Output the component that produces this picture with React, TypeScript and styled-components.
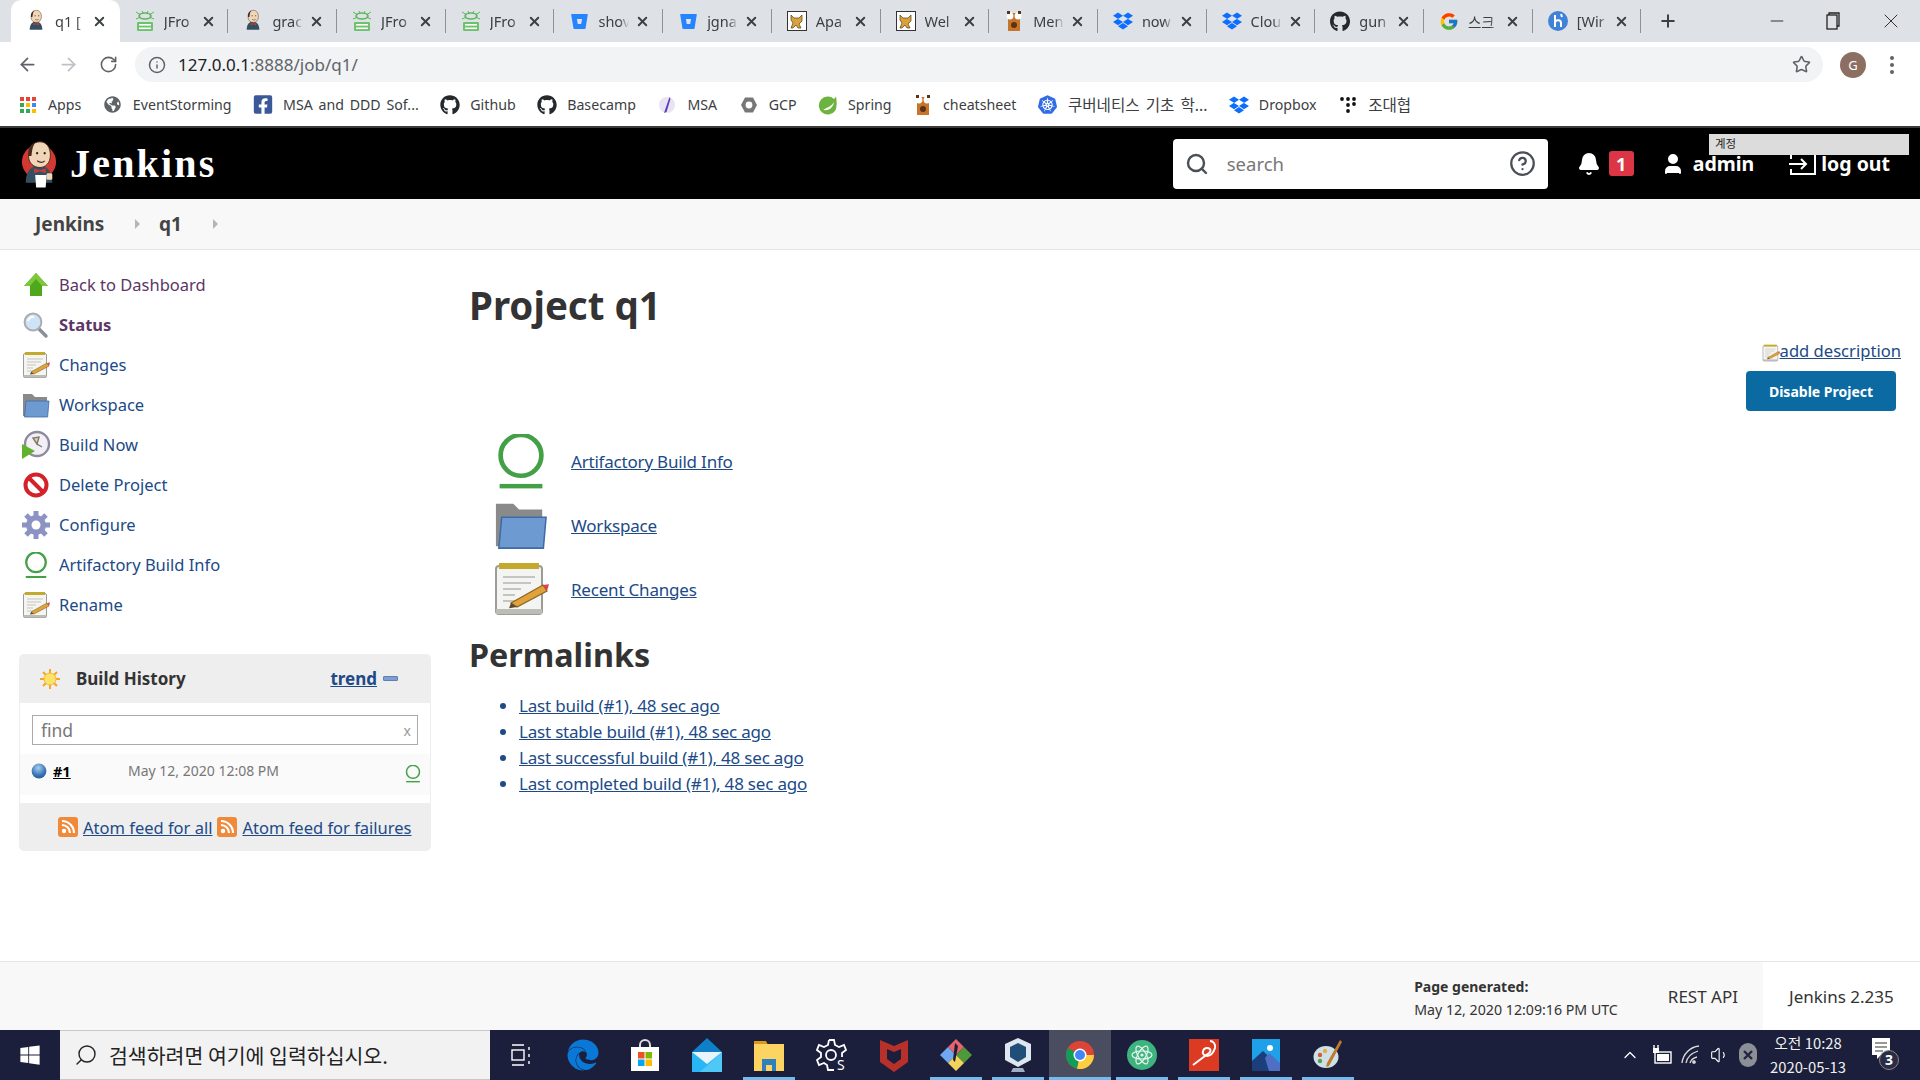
import type { ReactNode } from "react";
import styled, { createGlobalStyle } from "styled-components";
import { ArrowLeft, ArrowRight, RotateCw, Info, Star, Plus, X, Minus, Search, CircleHelp, Bell, User, ChevronUp, Volume1 } from "lucide-react";
import { FaGithub, FaDropbox, FaFacebookSquare, FaBitbucket, FaEdge, FaWindows, FaGlobeAmericas } from "react-icons/fa";
import { SiKubernetes } from "react-icons/si";
import { FcGoogle } from "react-icons/fc";

const Global = createGlobalStyle`
  html, body { margin: 0; padding: 0; background: #fff; }
  body { font-family: "Noto Sans", "Noto Sans CJK KR", sans-serif; overflow: hidden; }
  * { box-sizing: border-box; }
`;

const Screen = styled.div`
  width: 1920px;
  height: 1080px;
  display: flex;
  flex-direction: column;
  overflow: hidden;
  position: relative;
`;

/* ---------- drawings ---------- */

const Butler = ({ size = 24, red = false }: { size?: number; red?: boolean }) => (
  <svg width={size} height={size * 1.3} viewBox="0 0 40 52">
    {red && <circle cx="20" cy="24" r="18" fill="#d33833" />}
    <path d="M6 46c0-12 6-18 14-18s14 6 14 18z" fill="#335061" />
    <path d="M9 18c0-10 5-15 12-15s11 6 11 14c0 8-5 13-11 13S9 26 9 18z" fill="#f0d6b7" stroke="#49291b" strokeWidth="1" />
    <path d="M9 18c-1-9 4-14 7-14-3 4-3 8-4 14z" fill="#49291b" />
    <circle cx="18" cy="15" r="1.2" fill="#222" />
    <circle cx="26" cy="15" r="1.2" fill="#222" />
    <path d="M18 23c3 2 6 2 8 0" stroke="#49291b" fill="none" strokeWidth="1.2" />
    <path d="M15 31l6 2 6-2v5l-6-2-6 2z" fill="#d33833" />
    {red && <path d="M16 38h12l-1 13H17z" fill="#fff" />}
    {red && <rect x="28" y="36" width="6" height="7" rx="1.5" fill="#f0d6b7" />}
  </svg>
);

const FrogIcon = () => (
  <svg width="20" height="24" viewBox="0 0 20 24">
    <ellipse cx="10" cy="7" rx="6" ry="3" fill="none" stroke="#5cb85c" strokeWidth="1.6" />
    <path d="M1 3l5 3M19 3l-5 3M1 10l5-2M19 10l-5-2M7 2l1 2M13 2l-1 2" stroke="#5cb85c" strokeWidth="1" />
    <rect x="2" y="13" width="16" height="9" rx="1" fill="#6cc36c" />
    <rect x="4" y="15" width="12" height="1.6" fill="#fff" />
    <rect x="4" y="18.5" width="12" height="1.6" fill="#fff" />
  </svg>
);

const TomcatIcon = () => (
  <svg width="20" height="20" viewBox="0 0 20 20">
    <rect x=".5" y=".5" width="19" height="19" fill="#fff" stroke="#333" />
    <path d="M4 4l3 3h5l3-3v6l-3 3 2 4h-3l-2-3-3 3H4l2-5-2-3z" fill="#d9a23c" stroke="#5a3c12" strokeWidth=".7" />
  </svg>
);

const FoxIcon = ({ size = 20 }: { size?: number }) => (
  <svg width={size} height={size} viewBox="0 0 20 20">
    <rect x="4" y="2" width="12" height="18" fill="#c8742a" />
    <circle cx="6" cy="5" r="3.4" fill="#fff" />
    <circle cx="14" cy="5" r="3.4" fill="#fff" />
    <circle cx="10" cy="14" r="3" fill="#5b3418" />
    <rect x="3" y="0" width="3" height="3" fill="#5b3418" />
    <rect x="14" y="0" width="3" height="3" fill="#5b3418" />
  </svg>
);

const HIcon = () => (
  <svg width="20" height="20" viewBox="0 0 20 20">
    <circle cx="10" cy="10" r="10" fill="#3f82d8" />
    <path d="M7 4v12M7 11c2-3 6-2 6 1v4M13 3l1 3" stroke="#fff" strokeWidth="2" fill="none" />
  </svg>
);

const AppsGrid = () => (
  <svg width="16" height="16" viewBox="0 0 16 16">
    {[0, 6, 12].map((y, r) =>
      [0, 6, 12].map((x, c) => (
        <rect key={`${r}${c}`} x={x} y={y} width="4" height="4" fill={[["#ea4335", "#ea4335", "#ea4335"], ["#34a853", "#fbbc04", "#4285f4"], ["#34a853", "#34a853", "#fbbc04"]][r][c]} />
      ))
    )}
  </svg>
);

const MsaIcon = () => (
  <svg width="18" height="18" viewBox="0 0 18 18">
    <circle cx="9" cy="9" r="8" fill="#e9e3f5" />
    <path d="M11.5 1L6 17l2.5-1 4-13z" fill="#5b3fb0" />
  </svg>
);

const GcpIcon = () => (
  <svg width="18" height="18" viewBox="0 0 18 18">
    <path d="M5 1.5h8L17 9l-4 7.5H5L1 9z" fill="#777" />
    <circle cx="9" cy="9" r="3.4" fill="#fff" />
  </svg>
);

const SpringIcon = () => (
  <svg width="20" height="20" viewBox="0 0 20 20">
    <path d="M18 1c0 1-1 2-2 3A9 9 0 1 0 17 16c2-3 2-9 1-15z" fill="#6db33f" />
    <path d="M5 15c7 1 10-3 11-8-2 4-6 5-11 8z" fill="#fff" />
  </svg>
);

const BraillIcon = () => (
  <svg width="16" height="18" viewBox="0 0 16 18">
    {[[2, 3], [8, 3], [14, 3], [8, 9], [14, 8], [8, 15]].map(([x, y]) => (
      <circle key={`${x}${y}`} cx={x} cy={y} r="1.9" fill="#111" />
    ))}
  </svg>
);

const UpArrowIcon = () => (
  <svg width="28" height="28" viewBox="0 0 28 28">
    <path d="M14 2L26 15h-6v10H8V15H2z" fill="#4fa81c" />
    <path d="M14 2L26 15h-6L14 8 8 15H2z" fill="#7cc83a" />
  </svg>
);

const MagnifierIcon = () => (
  <svg width="28" height="28" viewBox="0 0 28 28">
    <path d="M16 17l8 8" stroke="#8a8f96" strokeWidth="3.4" strokeLinecap="round" />
    <circle cx="11" cy="11" r="8.4" fill="#cfe3f7" stroke="#a9adb2" strokeWidth="2" />
    <path d="M6 10a5 5 0 0 1 6-4" stroke="#fff" strokeWidth="2" fill="none" />
  </svg>
);

const Notepad = ({ size = 28 }: { size?: number }) => (
  <svg width={size} height={size} viewBox="0 0 28 28">
    <rect x="1.5" y="2.5" width="23" height="24" rx="1.5" fill="#f4f4f2" stroke="#9c9c98" />
    <rect x="1.5" y="24" width="23" height="2.5" fill="#bdbdb8" />
    <rect x="3" y="1" width="20" height="3" fill="#c3a92c" />
    <path d="M5 8h16M5 11h14M5 14h9M5 17h6M5 20h12" stroke="#c5c5c0" strokeWidth="1" />
    <path d="M9 21l16-9 2 3-15 8z" fill="#e0a33c" stroke="#8a6420" strokeWidth=".6" />
    <path d="M25 12l2 3 1-3.4z" fill="#e0414a" />
    <path d="M9 21l3 2-4 .6z" fill="#5a4a2a" />
  </svg>
);

const Folder = ({ size = 28 }: { size?: number }) => (
  <svg width={size} height={size} viewBox="0 0 28 28">
    <path d="M1 25V3h9l3 3h12v19z" fill="#8a8a8a" />
    <path d="M4 10h23l-1.4 16H2.5z" fill="#6d9bd1" stroke="#3d6ca8" strokeWidth=".8" />
  </svg>
);

const ClockPlayIcon = () => (
  <svg width="30" height="30" viewBox="0 0 30 30">
    <circle cx="16" cy="14" r="12" fill="#f2f0f5" stroke="#8d8aa0" strokeWidth="2.4" />
    <path d="M16 14l-4-6 6-1zM16 14l5 3" stroke="#777" strokeWidth="1.4" fill="#f0d987" />
    <path d="M1 14l13 7-13 8z" fill="#5fb32c" />
  </svg>
);

const BanIcon = () => (
  <svg width="28" height="28" viewBox="0 0 28 28">
    <circle cx="14" cy="14" r="10.5" fill="#fff" stroke="#d4222a" strokeWidth="4" />
    <path d="M7 7l14 14" stroke="#d4222a" strokeWidth="4" />
  </svg>
);

const GearIcon = () => (
  <svg width="30" height="30" viewBox="0 0 30 30">
    <path d="M15 15m-10 0a10 10 0 1 0 20 0a10 10 0 1 0-20 0" fill="#8c93c4" />
    <path d="M15 1v28M1 15h28M5 5l20 20M25 5L5 25" stroke="#8c93c4" strokeWidth="5" />
    <circle cx="15" cy="15" r="4.5" fill="#fff" />
  </svg>
);

const Artifactory = ({ size = 24 }: { size?: number }) => (
  <svg width={size} height={size * 1.1} viewBox="0 0 46 54">
    <circle cx="23" cy="21" r="20" fill="none" stroke="#43a047" strokeWidth="4.6" />
    <rect x="2" y="49" width="42" height="4.4" fill="#43a047" />
  </svg>
);

const Sun = () => (
  <svg width="20" height="20" viewBox="0 0 20 20">
    <path d="M10 0v20M0 10h20M3 3l14 14M17 3L3 17" stroke="#f6a623" strokeWidth="2" />
    <circle cx="10" cy="10" r="6" fill="#fbe36a" stroke="#f6b73c" />
  </svg>
);

const Ball = () => (
  <svg width="16" height="16" viewBox="0 0 16 16">
    <defs>
      <radialGradient id="ball" cx=".45" cy=".3" r=".8">
        <stop offset="0" stopColor="#a9cdef" />
        <stop offset=".6" stopColor="#3c77b8" />
        <stop offset="1" stopColor="#1f4f8a" />
      </radialGradient>
    </defs>
    <circle cx="8" cy="8" r="7.4" fill="url(#ball)" />
  </svg>
);

const Rss = () => (
  <svg width="20" height="20" viewBox="0 0 20 20">
    <rect width="20" height="20" rx="3" fill="#ee8a3a" />
    <circle cx="6" cy="14" r="2.2" fill="#fff" />
    <path d="M4 8a8 8 0 0 1 8 8M4 4a12 12 0 0 1 12 12" stroke="#fff" strokeWidth="2.2" fill="none" />
  </svg>
);

const LogoutIcon = () => (
  <svg width="28" height="24" viewBox="0 0 28 24" fill="none" stroke="#fff" strokeWidth="2">
    <path d="M2 7V2h24v20H2v-5" />
    <path d="M0 12h17M12 7l5 5-5 5" />
  </svg>
);

const ChromeIcon = ({ size = 28 }: { size?: number }) => (
  <svg width={size} height={size} viewBox="0 0 28 28">
    <circle cx="14" cy="14" r="14" fill="#db4437" />
    <path d="M14 14L2 7A14 14 0 0 0 11 27.7z" fill="#0f9d58" />
    <path d="M14 14h14a14 14 0 0 1-17 13.7z" fill="#ffcd40" />
    <circle cx="14" cy="14" r="6.5" fill="#fff" />
    <circle cx="14" cy="14" r="5" fill="#4285f4" />
  </svg>
);

const StoreIcon = () => (
  <svg width="28" height="32" viewBox="0 0 28 32">
    <path d="M9 9V6a5 5 0 0 1 10 0v3" stroke="#ddd" strokeWidth="2" fill="none" />
    <rect y="8" width="28" height="24" fill="#fff" />
    <rect x="7" y="13" width="6.5" height="6.5" fill="#f25022" />
    <rect x="14.5" y="13" width="6.5" height="6.5" fill="#7fba00" />
    <rect x="7" y="20.5" width="6.5" height="6.5" fill="#00a4ef" />
    <rect x="14.5" y="20.5" width="6.5" height="6.5" fill="#ffb900" />
  </svg>
);

const MailIcon = () => (
  <svg width="30" height="34" viewBox="0 0 30 34">
    <path d="M15 0L30 14v20H0V14z" fill="#0f7fc8" />
    <path d="M0 14h30v20H0z" fill="#29b6f6" />
    <path d="M0 14h30L15 26z" fill="#e8f3fb" />
    <path d="M30 14v20H8z" fill="#4fc8f7" />
  </svg>
);

const ExplorerIcon = () => (
  <svg width="30" height="32" viewBox="0 0 30 32">
    <path d="M0 2h12l2 4H0z" fill="#d99a1c" />
    <rect y="5" width="30" height="27" fill="#fcd462" />
    <rect x="8" y="20" width="14" height="12" fill="#2f7fbd" />
    <rect x="12" y="26" width="6" height="6" fill="#fcd462" />
  </svg>
);

const CogSIcon = () => (
  <svg width="32" height="34" viewBox="0 0 32 34" fill="none" stroke="#fff" strokeWidth="1.8">
    <path d="M13 2h5l1 5 4 2 5-2 2 5-4 3v4" />
    <path d="M13 2l-1 5-4 2-5-2-2 5 4 3v4l-4 3 2 5 5-2 3 2 1 5h6" />
    <circle cx="15" cy="17" r="5" />
    <text x="21" y="32" fill="#fff" stroke="none" fontSize="14" fontFamily="Noto Sans">S</text>
  </svg>
);

const McAfeeIcon = () => (
  <svg width="28" height="34" viewBox="0 0 28 34">
    <path d="M0 2l14 6 14-6v22l-14 10L0 24z" fill="#b8302a" />
    <path d="M7 11l7 3 7-3v10l-7 5-7-5z" fill="#1b1f3b" />
  </svg>
);

const KrakenIcon = () => (
  <svg width="32" height="32" viewBox="0 0 32 32">
    <path d="M0 16l8-8 8 8-8 8z" fill="#6fa8f0" />
    <path d="M8 8l8-8 8 8-8 8z" fill="#e8646c" />
    <path d="M16 16l8-8 8 8-8 8z" fill="#4e9a3a" />
    <path d="M8 24l8-8 8 8-8 8z" fill="#f2d35c" />
    <path d="M15 4l3 3-3 16-2-2z" fill="#1b1f3b" />
  </svg>
);

const BoxIcon = () => (
  <svg width="30" height="36" viewBox="0 0 30 36">
    <path d="M15 1l13 6v16l-13 7L2 23V7z" fill="#dfe6ef" />
    <path d="M15 6l8 4v10l-8 5-8-5V10z" fill="#1f4e79" />
    <path d="M10 31h10l2 4H8z" fill="#9fb0c4" />
  </svg>
);

const AtomIcon = () => (
  <svg width="30" height="30" viewBox="0 0 30 30">
    <circle cx="15" cy="15" r="15" fill="#3fb37f" />
    <g fill="none" stroke="#e6f6ee" strokeWidth="1.2">
      <ellipse cx="15" cy="15" rx="10" ry="4" />
      <ellipse cx="15" cy="15" rx="10" ry="4" transform="rotate(60 15 15)" />
      <ellipse cx="15" cy="15" rx="10" ry="4" transform="rotate(120 15 15)" />
    </g>
    <circle cx="15" cy="15" r="1.6" fill="#e6f6ee" />
  </svg>
);

const RedAppIcon = () => (
  <svg width="30" height="32" viewBox="0 0 30 32">
    <rect width="30" height="32" fill="#dd3a24" />
    <path d="M4 26L20 14c5-4-4-8-6-2-2 5 8 9 12-3 1-4-2-7-5-7" stroke="#fff" strokeWidth="2" fill="none" />
  </svg>
);

const PhotosIcon = () => (
  <svg width="28" height="32" viewBox="0 0 28 32">
    <rect width="28" height="32" fill="#1ea1e8" />
    <circle cx="18" cy="9" r="3" fill="#fff" />
    <path d="M0 32V22l11-10 17 16v4z" fill="#1c3f7c" />
    <path d="M17 14l11 10v8H17l-4-13z" fill="#4f6fc4" />
  </svg>
);

const PaletteIcon = () => (
  <svg width="30" height="32" viewBox="0 0 30 32">
    <ellipse cx="13" cy="18" rx="12.5" ry="11" fill="#cfe0e8" />
    <circle cx="7" cy="16" r="2.2" fill="#d85a3c" />
    <circle cx="12" cy="12" r="2.2" fill="#e0b23c" />
    <circle cx="7" cy="22" r="2.2" fill="#5aa04c" />
    <path d="M27 1l2 2-13 24-3 1 1-4z" fill="#c07a2c" />
  </svg>
);

const BatteryIcon = () => (
  <svg width="20" height="20" viewBox="0 0 20 20">
    <path d="M2 0v4M6 0v4" stroke="#fff" strokeWidth="1.4" />
    <rect x="1" y="3" width="6" height="5" fill="#fff" />
    <rect x="3" y="7" width="16" height="11" fill="none" stroke="#fff" strokeWidth="1.4" />
    <rect x="5" y="9" width="12" height="7" fill="#fff" />
  </svg>
);

const WifiIcon = () => (
  <svg width="20" height="20" viewBox="0 0 20 20" fill="none" stroke="#ddd" strokeWidth="1.3">
    <path d="M1 18C2 9 9 2 18 1M5 18c1-6 6-10 12-12M9 18c1-3 3-5 7-6" />
    <circle cx="13" cy="17" r="1.2" fill="#ddd" />
  </svg>
);

const CloseDot = () => (
  <svg width="18" height="24" viewBox="0 0 18 24">
    <rect width="18" height="24" rx="9" fill="#8d8f96" />
    <path d="M5 8l8 8M13 8l-8 8" stroke="#22253f" strokeWidth="2.4" />
  </svg>
);

const ActionCenter = () => (
  <svg width="34" height="38" viewBox="0 0 34 38">
    <path d="M3 2h18v17H12l-4 4v-4H3z" fill="#fff" />
    <path d="M6 7h12M6 11h12M6 15h8" stroke="#333" strokeWidth="1.2" />
    <circle cx="20" cy="24" r="9.5" fill="#2a2d45" stroke="#888" />
    <text x="20" y="29" textAnchor="middle" fontSize="14" fontWeight="700" fill="#fff" fontFamily="Noto Sans">3</text>
  </svg>
);

/* ---------- browser chrome ---------- */

const TabStrip = styled.div`
  height: 42px;
  flex: none;
  background: #dee1e6;
  display: flex;
  align-items: stretch;
  padding-left: 11px;
`;

const TabItem = styled.div<{ $active?: boolean }>`
  width: 108.7px;
  flex: none;
  display: flex;
  align-items: center;
  padding-left: 15px;
  position: relative;
  background: ${(p) => (p.$active ? "#fff" : "transparent")};
  border-radius: ${(p) => (p.$active ? "10px 10px 0 0" : "0")};

  &::after {
    content: "";
    display: ${(p) => (p.$active ? "none" : "block")};
    position: absolute;
    right: 0;
    top: 9px;
    bottom: 9px;
    width: 1px;
    background: #8f9296;
  }
`;

const TabIcon = styled.span`
  width: 20px;
  height: 24px;
  flex: none;
  display: flex;
  align-items: center;
  justify-content: center;
`;

const TabTitle = styled.span`
  width: 31px;
  margin-left: 9px;
  font-size: 14.5px;
  color: #3c4043;
  white-space: nowrap;
  overflow: hidden;
  -webkit-mask-image: linear-gradient(90deg, #000 70%, transparent);
  mask-image: linear-gradient(90deg, #000 70%, transparent);
`;

const TabClose = styled.span`
  margin-left: 6px;
  display: flex;
  color: #3c4043;
`;

const NewTab = styled.span`
  margin-left: 17px;
  display: flex;
  align-items: center;
  color: #3c4043;
`;

const WindowButtons = styled.div`
  margin-left: auto;
  display: flex;
  align-items: center;
  gap: 39px;
  padding-right: 17px;
  color: #333;
`;

const Toolbar = styled.div`
  height: 45px;
  flex: none;
  display: flex;
  align-items: center;
  padding: 0 17px;
  background: #fff;
  color: #5f6368;
`;

const NavButton = styled.span<{ $off?: boolean }>`
  width: 41px;
  display: flex;
  color: ${(p) => (p.$off ? "#bdc1c6" : "#5f6368")};
`;

const Omnibox = styled.div`
  height: 35px;
  width: 1688px;
  flex: none;
  background: #f1f3f4;
  border-radius: 18px;
  display: flex;
  align-items: center;
  padding: 0 12px 0 13px;
  margin-left: -5px;
`;

const UrlText = styled.span`
  margin-left: 12px;
  font-size: 17px;
  color: #202124;
  span { color: #5f6368; }
`;

const OmniEnd = styled.span`
  margin-left: auto;
  display: flex;
`;

const Avatar = styled.span`
  width: 26px;
  height: 26px;
  margin-left: 17px;
  border-radius: 50%;
  background: #8d6e63;
  color: #fff;
  font-size: 13px;
  display: flex;
  align-items: center;
  justify-content: center;
  flex: none;
`;

const Dots = styled.span`
  margin-left: 24px;
  display: flex;
  flex-direction: column;
  gap: 3px;

  i {
    width: 4px;
    height: 4px;
    border-radius: 50%;
    background: #5f6368;
  }
`;

const BookmarkBar = styled.div`
  height: 41px;
  flex: none;
  display: flex;
  align-items: center;
  gap: 21.5px;
  padding: 0 0 4px 18px;
  border-bottom: 2px solid #3a3a3a;
  background: #fff;
`;

const Bookmark = styled.span<{ $cjk?: boolean }>`
  display: flex;
  align-items: center;
  gap: 10px;
  font-size: ${(p) => (p.$cjk ? "15.6px" : "14.2px")};
  word-spacing: 2px;
  color: #3c4043;
  white-space: nowrap;
`;

const BookmarkIcon = styled.span`
  width: 20px;
  display: flex;
  justify-content: center;
`;

/* ---------- jenkins header ---------- */

const JenkinsBar = styled.header`
  height: 71px;
  flex: none;
  background: #000;
  display: flex;
  align-items: center;
  padding-left: 20px;
  color: #fff;
  position: relative;
`;

const Brand = styled.span`
  margin-left: 12px;
  font-family: "Liberation Serif", serif;
  font-weight: 700;
  font-size: 40px;
  letter-spacing: 2.2px;
`;

const SearchBox = styled.div`
  margin-left: auto;
  width: 375px;
  height: 50px;
  background: #fff;
  border-radius: 4px;
  display: flex;
  align-items: center;
  padding: 0 12px;
  color: #4a4f57;
`;

const SearchLabel = styled.span`
  margin-left: 18px;
  font-size: 18.5px;
  color: #777;
  flex: 1;
`;

const BellWrap = styled.span`
  margin-left: 29px;
  display: flex;
`;

const CountBadge = styled.span`
  margin-left: 8px;
  width: 25px;
  height: 25px;
  border-radius: 3px;
  background: #dc3545;
  font-weight: 700;
  font-size: 18px;
  display: flex;
  align-items: center;
  justify-content: center;
`;

const HeadLink = styled.span<{ $gap: number; $left: number }>`
  margin-left: ${(p) => p.$left}px;
  display: flex;
  align-items: center;
  gap: ${(p) => p.$gap}px;
  font-size: 19.5px;
  font-weight: 700;
`;

const HeadEnd = styled.span`
  width: 30px;
  flex: none;
`;

const Tooltip = styled.div`
  position: absolute;
  left: 1709px;
  top: 6px;
  width: 200px;
  height: 21px;
  background: #dcdcdc;
  color: #222;
  font-size: 11.5px;
  padding: 1px 6px;
  font-family: "Noto Sans CJK KR", sans-serif;
`;

const Breadcrumbs = styled.nav`
  height: 51px;
  flex: none;
  background: #f8f8f8;
  border-bottom: 1px solid #e6e6e6;
  display: flex;
  align-items: center;
  padding-left: 35px;
  font-weight: 700;
  font-size: 19px;
  color: #444;
`;

const Crumb = styled.span<{ $width: number }>`
  width: ${(p) => p.$width}px;
`;

const Caret = styled.i<{ $width: number }>`
  width: ${(p) => p.$width}px;
  height: 0;
  border-left: 5px solid #b5b5b5;
  border-top: 5px solid transparent;
  border-bottom: 5px solid transparent;
`;

/* ---------- page ---------- */

const Body = styled.div`
  flex: 1;
  display: flex;
  min-height: 0;
`;

const SideColumn = styled.aside`
  width: 470px;
  flex: none;
  padding: 15px 0 0 19px;
`;

const TaskRow = styled.div`
  height: 40px;
  display: flex;
  align-items: center;
`;

const TaskIcon = styled.span`
  width: 40px;
  flex: none;
  display: flex;
  justify-content: center;
  padding-right: 6px;
`;

const TaskLabel = styled.span<{ $visited?: boolean; $bold?: boolean }>`
  font-size: 16.5px;
  padding-bottom: 2px;
  color: ${(p) => (p.$visited ? "#5c3566" : "#204a87")};
  font-weight: ${(p) => (p.$bold ? 700 : 400)};
`;

const HistoryPanel = styled.section`
  margin-top: 29px;
  width: 412px;
  border-radius: 5px;
  background: #eee;
  overflow: hidden;
`;

const HistoryHead = styled.div`
  height: 49px;
  display: flex;
  align-items: center;
  padding: 0 33px 0 21px;
  font-size: 17px;
  font-weight: 700;
  color: #333;
`;

const HistoryTitle = styled.span`
  margin-left: 16px;
`;

const TrendLink = styled.a`
  margin-left: auto;
  color: #204a87;
  text-decoration: underline;
`;

const TrendDash = styled.i`
  width: 15px;
  height: 5px;
  margin-left: 6px;
  background: #7f9fd0;
  border: 1px solid #5f7fb8;
  border-radius: 1px;
`;

const HistoryBody = styled.div`
  height: 100px;
  background: #fff;
  margin: 0 1px;
  padding-top: 12px;
`;

const FindBox = styled.div`
  margin: 0 12px;
  height: 30px;
  border: 1px solid #aaa;
  display: flex;
  align-items: center;
  justify-content: space-between;
  padding: 0 6px 0 8px;
  font-size: 17.5px;
  color: #777;
`;

const SmallX = styled.span`
  font-size: 14px;
  color: #999;
`;

const BuildRow = styled.div`
  margin-top: 9px;
  height: 41px;
  background: #fafafa;
  display: flex;
  align-items: flex-start;
  padding: 7px 9px 0 11px;

  svg:first-child {
    margin-top: 2px;
  }
`;

const BuildNumber = styled.a`
  margin-left: 6px;
  font-size: 14.5px;
  font-weight: 700;
  color: #000;
  text-decoration: underline;
  width: 75px;
`;

const BuildDate = styled.span`
  font-size: 14px;
  color: #777;
  flex: 1;
`;

const BuildMark = styled.span`
  margin-top: 2px;
  display: flex;
`;

const HistoryFoot = styled.div`
  height: 48px;
  display: flex;
  align-items: center;
  padding-left: 39px;
  gap: 5px;
`;

const FeedLink = styled.a`
  font-size: 16.5px;
  color: #204a87;
  text-decoration: underline;
`;

const Main = styled.main`
  flex: 1;
  position: relative;
  min-width: 0;
`;

const PageTitle = styled.h1`
  margin: 27px 0 0 -1px;
  font-size: 38.5px;
  line-height: 56px;
  font-weight: 700;
  color: #333;
`;

const SideActions = styled.div`
  position: absolute;
  right: 19px;
  top: 90px;
  display: flex;
  flex-direction: column;
  align-items: flex-end;
`;

const AddDescription = styled.div`
  display: flex;
  align-items: flex-end;
  font-size: 16.6px;
  line-height: 22px;

  a {
    color: #204a87;
    text-decoration: underline;
  }
`;

const DisableButton = styled.button`
  margin: 9px 5px 0 0;
  width: 150px;
  height: 40px;
  border: 0;
  border-radius: 4px;
  background: #0b6aa2;
  color: #fff;
  font: 700 14px "Noto Sans", sans-serif;
`;

const BigLinks = styled.div`
  margin-top: 96px;
  padding-left: 23px;
`;

const BigRow = styled.div`
  height: 64px;
  display: flex;
  align-items: center;
`;

const BigIcon = styled.span`
  width: 56px;
  margin-right: 22px;
  flex: none;
  display: flex;
  justify-content: center;
`;

const PageLink = styled.a`
  font-size: 17px;
  letter-spacing: -0.2px;
  color: #204a87;
  text-decoration: underline;
`;

const SubTitle = styled.h2`
  margin: 9px 0 0 -1px;
  font-size: 32.3px;
  line-height: 48px;
  font-weight: 700;
  color: #333;
`;

const PermaList = styled.ul`
  margin: 15px 0 0;
  padding-left: 49px;
  font-size: 17px;
  line-height: 26px;

  li {
    color: #204a87;
  }
`;

/* ---------- footer and taskbar ---------- */

const Foot = styled.footer`
  height: 69px;
  flex: none;
  background: #f8f8f8;
  border-top: 1px solid #e6e6e6;
  display: flex;
  justify-content: flex-end;
  align-items: stretch;
  color: #333;
`;

const FootBlock = styled.div`
  margin-right: 50px;
  align-self: center;
  font-size: 14.2px;
  line-height: 23px;
  padding-top: 3px;

  b {
    display: block;
    font-weight: 700;
    font-size: 14px;
  }
`;

const FootLink = styled.div`
  align-self: center;
  font-size: 17px;
  margin-right: 25px;
`;

const VersionCell = styled.div`
  width: 157px;
  background: #fff;
  display: flex;
  align-items: center;
  padding-left: 26px;
  font-size: 17px;
`;

const Taskbar = styled.div`
  height: 50px;
  flex: none;
  background: #1b1f3b;
  display: flex;
  align-items: stretch;
  color: #fff;
`;

const StartButton = styled.span`
  width: 60px;
  display: flex;
  align-items: center;
  justify-content: center;
`;

const TaskSearch = styled.div`
  width: 430px;
  flex: none;
  background: #f2f2f2;
  border-top: 1px solid #c8c8c8;
  border-bottom: 1px solid #c8c8c8;
  display: flex;
  align-items: center;
  padding-left: 14px;
  color: #222;
  font-size: 20.5px;
  font-family: "Noto Sans CJK KR", sans-serif;
  white-space: nowrap;

  svg {
    transform: scaleX(-1);
  }
`;

const SearchText = styled.span`
  margin-left: 11px;
`;

const Slot = styled.span<{ $open?: boolean; $active?: boolean }>`
  width: 62.1px;
  flex: none;
  display: flex;
  align-items: center;
  justify-content: center;
  position: relative;
  background: ${(p) => (p.$active ? "#4a4c60" : "transparent")};

  &::after {
    content: "";
    display: ${(p) => (p.$open ? "block" : "none")};
    position: absolute;
    left: ${(p) => (p.$active ? 0 : "5px")};
    right: ${(p) => (p.$active ? 0 : "5px")};
    bottom: 0;
    height: 3px;
    background: #76b9ed;
  }
`;

const Tray = styled.div`
  margin-left: auto;
  display: flex;
  align-items: center;
  gap: 9px;
  padding-right: 17px;
`;

const TrayCaret = styled.span`
  display: flex;
  margin-right: 3px;
`;

const Clock = styled.div`
  width: 84px;
  margin-right: 10px;
  font-size: 14.8px;
  line-height: 24px;
  text-align: center;
  font-family: "Noto Sans CJK KR", sans-serif;
  color: #f0f0f0;
`;

const tabs: { icon: ReactNode; title: string }[] = [
  { icon: <Butler size={18} />, title: "q1 [" },
  { icon: <FrogIcon />, title: "JFro" },
  { icon: <Butler size={18} />, title: "grac" },
  { icon: <FrogIcon />, title: "JFro" },
  { icon: <FrogIcon />, title: "JFro" },
  { icon: <FaBitbucket size={17} color="#2684ff" />, title: "shov" },
  { icon: <FaBitbucket size={17} color="#2684ff" />, title: "jgna" },
  { icon: <TomcatIcon />, title: "Apa" },
  { icon: <TomcatIcon />, title: "Wel" },
  { icon: <FoxIcon />, title: "Men" },
  { icon: <FaDropbox size={20} color="#0d6efd" />, title: "now" },
  { icon: <FaDropbox size={20} color="#0d6efd" />, title: "Clou" },
  { icon: <FaGithub size={21} color="#24292e" />, title: "gun" },
  { icon: <FcGoogle size={21} />, title: "스크" },
  { icon: <HIcon />, title: "[Wir" },
];

const bookmarks: { icon: ReactNode; label: string; cjk?: boolean }[] = [
  { icon: <FaGlobeAmericas size={17} color="#5f6368" />, label: "EventStorming" },
  { icon: <FaFacebookSquare size={21} color="#3b5998" />, label: "MSA and DDD Sof..." },
  { icon: <FaGithub size={20} color="#24292e" />, label: "Github" },
  { icon: <FaGithub size={20} color="#24292e" />, label: "Basecamp" },
  { icon: <MsaIcon />, label: "MSA" },
  { icon: <GcpIcon />, label: "GCP" },
  { icon: <SpringIcon />, label: "Spring" },
  { icon: <FoxIcon />, label: "cheatsheet" },
  { icon: <SiKubernetes size={19} color="#326ce5" />, label: "쿠버네티스 기초 학...", cjk: true },
  { icon: <FaDropbox size={20} color="#0d6efd" />, label: "Dropbox" },
  { icon: <BraillIcon />, label: "조대협", cjk: true },
];

const tasks: { icon: ReactNode; label: string; visited?: boolean; bold?: boolean }[] = [
  { icon: <UpArrowIcon />, label: "Back to Dashboard", visited: true },
  { icon: <MagnifierIcon />, label: "Status", visited: true, bold: true },
  { icon: <Notepad />, label: "Changes" },
  { icon: <Folder />, label: "Workspace" },
  { icon: <ClockPlayIcon />, label: "Build Now" },
  { icon: <BanIcon />, label: "Delete Project" },
  { icon: <GearIcon />, label: "Configure" },
  { icon: <Artifactory />, label: "Artifactory Build Info" },
  { icon: <Notepad />, label: "Rename" },
];

const permalinks = [
  "Last build (#1), 48 sec ago",
  "Last stable build (#1), 48 sec ago",
  "Last successful build (#1), 48 sec ago",
  "Last completed build (#1), 48 sec ago",
];

const taskbarApps: { icon: ReactNode; open?: boolean; active?: boolean }[] = [
  { icon: <FaEdge size={32} color="#0a78d7" /> },
  { icon: <StoreIcon /> },
  { icon: <MailIcon /> },
  { icon: <ExplorerIcon />, open: true },
  { icon: <CogSIcon /> },
  { icon: <McAfeeIcon /> },
  { icon: <KrakenIcon />, open: true },
  { icon: <BoxIcon />, open: true },
  { icon: <ChromeIcon />, open: true, active: true },
  { icon: <AtomIcon />, open: true },
  { icon: <RedAppIcon />, open: true },
  { icon: <PhotosIcon />, open: true },
  { icon: <PaletteIcon />, open: true },
];

export default function App() {
  return (
    <Screen>
      <Global />
      <TabStrip>
        {tabs.map((t, i) => (
          <TabItem key={i} $active={i === 0}>
            <TabIcon>{t.icon}</TabIcon>
            <TabTitle>{t.title}</TabTitle>
            <TabClose>
              <X size={15} strokeWidth={3} />
            </TabClose>
          </TabItem>
        ))}
        <NewTab>
          <Plus size={20} strokeWidth={2.4} />
        </NewTab>
        <WindowButtons>
          <Minus size={20} strokeWidth={1.2} />
          <svg width="14" height="18" viewBox="0 0 14 18" fill="none" stroke="#222" strokeWidth="1.3">
            <path d="M3 3V1h10v13h-2" />
            <rect x="1" y="3" width="10" height="14" />
          </svg>
          <X size={24} strokeWidth={1} />
        </WindowButtons>
      </TabStrip>

      <Toolbar>
        <NavButton>
          <ArrowLeft size={21} />
        </NavButton>
        <NavButton $off>
          <ArrowRight size={21} />
        </NavButton>
        <NavButton>
          <RotateCw size={19} />
        </NavButton>
        <Omnibox>
          <Info size={18} />
          <UrlText>
            127.0.0.1<span>:8888/job/q1/</span>
          </UrlText>
          <OmniEnd>
            <Star size={19} />
          </OmniEnd>
        </Omnibox>
        <Avatar>G</Avatar>
        <Dots>
          <i />
          <i />
          <i />
        </Dots>
      </Toolbar>

      <BookmarkBar>
        <Bookmark>
          <BookmarkIcon>
            <AppsGrid />
          </BookmarkIcon>
          Apps
        </Bookmark>
        {bookmarks.map((b) => (
          <Bookmark key={b.label} $cjk={b.cjk}>
            <BookmarkIcon>{b.icon}</BookmarkIcon>
            {b.label}
          </Bookmark>
        ))}
      </BookmarkBar>

      <JenkinsBar>
        <Butler size={38} red />
        <Brand>Jenkins</Brand>
        <SearchBox>
          <Search size={24} strokeWidth={2.4} />
          <SearchLabel>search</SearchLabel>
          <CircleHelp size={27} strokeWidth={2} />
        </SearchBox>
        <BellWrap>
          <Bell size={24} fill="#fff" />
        </BellWrap>
        <CountBadge>1</CountBadge>
        <HeadLink $gap={8} $left={27}>
          <User size={24} fill="#fff" />
          admin
        </HeadLink>
        <HeadLink $gap={4} $left={35}>
          <LogoutIcon />
          <span>log out</span>
        </HeadLink>
        <HeadEnd />
        <Tooltip>계정</Tooltip>
      </JenkinsBar>

      <Breadcrumbs>
        <Crumb $width={100}>Jenkins</Crumb>
        <Caret $width={24} />
        <Crumb $width={54}>q1</Crumb>
        <Caret $width={5} />
      </Breadcrumbs>

      <Body>
        <SideColumn>
          {tasks.map((t) => (
            <TaskRow key={t.label}>
              <TaskIcon>{t.icon}</TaskIcon>
              <TaskLabel $visited={t.visited} $bold={t.bold}>
                {t.label}
              </TaskLabel>
            </TaskRow>
          ))}
          <HistoryPanel>
            <HistoryHead>
              <Sun />
              <HistoryTitle>Build History</HistoryTitle>
              <TrendLink>trend</TrendLink>
              <TrendDash />
            </HistoryHead>
            <HistoryBody>
              <FindBox>
                find
                <SmallX>x</SmallX>
              </FindBox>
              <BuildRow>
                <Ball />
                <BuildNumber>#1</BuildNumber>
                <BuildDate>May 12, 2020 12:08 PM</BuildDate>
                <BuildMark>
                  <Artifactory size={16} />
                </BuildMark>
              </BuildRow>
            </HistoryBody>
            <HistoryFoot>
              <Rss />
              <FeedLink>Atom feed for all</FeedLink>
              <Rss />
              <FeedLink>Atom feed for failures</FeedLink>
            </HistoryFoot>
          </HistoryPanel>
        </SideColumn>

        <Main>
          <PageTitle>Project q1</PageTitle>
          <SideActions>
            <AddDescription>
              <Notepad size={18} />
              <a>add description</a>
            </AddDescription>
            <DisableButton>Disable Project</DisableButton>
          </SideActions>
          <BigLinks>
            <BigRow>
              <BigIcon>
                <Artifactory size={50} />
              </BigIcon>
              <PageLink>Artifactory Build Info</PageLink>
            </BigRow>
            <BigRow>
              <BigIcon>
                <Folder size={54} />
              </BigIcon>
              <PageLink>Workspace</PageLink>
            </BigRow>
            <BigRow>
              <BigIcon>
                <Notepad size={56} />
              </BigIcon>
              <PageLink>Recent Changes</PageLink>
            </BigRow>
          </BigLinks>
          <SubTitle>Permalinks</SubTitle>
          <PermaList>
            {permalinks.map((p) => (
              <li key={p}>
                <PageLink>{p}</PageLink>
              </li>
            ))}
          </PermaList>
        </Main>
      </Body>

      <Foot>
        <FootBlock>
          <b>Page generated:</b>
          May 12, 2020 12:09:16 PM UTC
        </FootBlock>
        <FootLink>REST API</FootLink>
        <VersionCell>Jenkins 2.235</VersionCell>
      </Foot>

      <Taskbar>
        <StartButton>
          <FaWindows size={22} color="#fff" />
        </StartButton>
        <TaskSearch>
          <Search size={24} strokeWidth={1.4} />
          <SearchText>검색하려면 여기에 입력하십시오.</SearchText>
        </TaskSearch>
        <Slot>
          <svg width="20" height="22" viewBox="0 0 20 22" fill="none" stroke="#fff" strokeWidth="1.4">
            <path d="M1 1h12M1 21h12" />
            <rect x="1" y="6" width="12" height="10" />
            <path d="M18 3v3M18 10v3M18 17v3" />
          </svg>
        </Slot>
        {taskbarApps.map((a, i) => (
          <Slot key={i} $open={a.open} $active={a.active}>
            {a.icon}
          </Slot>
        ))}
        <Tray>
          <TrayCaret>
            <ChevronUp size={20} strokeWidth={1.5} />
          </TrayCaret>
          <BatteryIcon />
          <WifiIcon />
          <Volume1 size={20} strokeWidth={1.3} />
          <CloseDot />
          <Clock>
            오전 10:28
            <br />
            2020-05-13
          </Clock>
          <ActionCenter />
        </Tray>
      </Taskbar>
    </Screen>
  );
}
